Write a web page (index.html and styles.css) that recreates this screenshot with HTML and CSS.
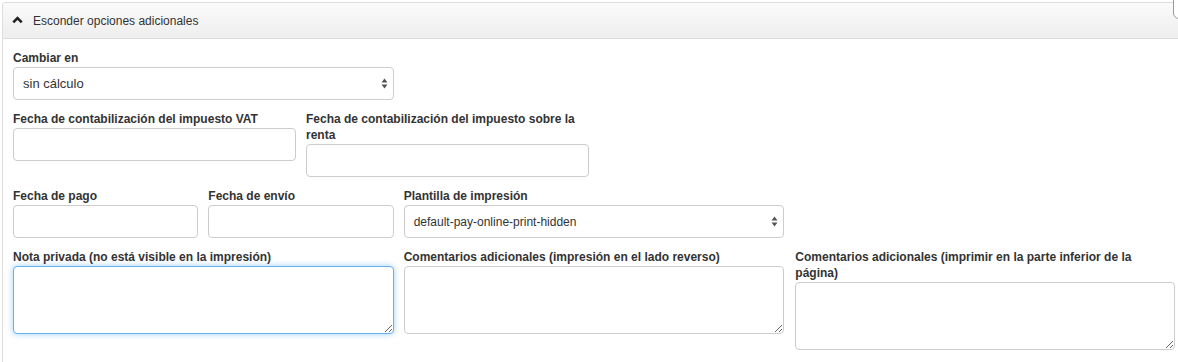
FILE: index.html
```html
<!DOCTYPE html>
<html lang="es">
<head>
    <meta charset="UTF-8" />
    <meta name="viewport" content="width=device-width, initial-scale=1" />
    <title>Opciones adicionales</title>
    <link rel="stylesheet" href="styles.css">
</head>
<body>
    <div class="panel">
        <div class="panel-heading">
            <svg class="chevron" width="11" height="9" viewBox="0 0 11 9">
                <polyline points="1.3,7.3 5.5,3 9.7,7.3" fill="none" stroke="#222" stroke-width="2.6" />
            </svg>
            <span>Esconder opciones adicionales</span>
        </div>
        <div class="panel-body">
            <div class="form-row">
                <div class="form-group span-4">
                    <label>Cambiar en</label>
                    <div class="select-wrap">
                        <select class="form-control"><option>sin cálculo</option></select>
                        <svg class="select-arrows" width="7" height="11" viewBox="0 0 7 11">
                            <polygon points="3.5,0.5 6.5,4.5 0.5,4.5" fill="#555" />
                            <polygon points="3.5,10.5 6.5,6.5 0.5,6.5" fill="#555" />
                        </svg>
                    </div>
                </div>
            </div>
            <div class="form-row">
                <div class="form-group span-3">
                    <label>Fecha de contabilización del impuesto VAT</label>
                    <input class="form-control" type="text">
                </div>
                <div class="form-group span-3">
                    <label>Fecha de contabilización del impuesto sobre la renta</label>
                    <input class="form-control" type="text">
                </div>
            </div>
            <div class="form-row">
                <div class="form-group span-2">
                    <label>Fecha de pago</label>
                    <input class="form-control" type="text">
                </div>
                <div class="form-group span-2">
                    <label>Fecha de envío</label>
                    <input class="form-control" type="text">
                </div>
                <div class="form-group span-4">
                    <label>Plantilla de impresión</label>
                    <div class="select-wrap">
                        <select class="form-control small"><option>default-pay-online-print-hidden</option></select>
                        <svg class="select-arrows" width="7" height="11" viewBox="0 0 7 11">
                            <polygon points="3.5,0.5 6.5,4.5 0.5,4.5" fill="#555" />
                            <polygon points="3.5,10.5 6.5,6.5 0.5,6.5" fill="#555" />
                        </svg>
                    </div>
                </div>
            </div>
            <div class="form-row">
                <div class="form-group span-4">
                    <label>Nota privada (no está visible en la impresión)</label>
                    <textarea class="form-control focused"></textarea>
                </div>
                <div class="form-group span-4">
                    <label>Comentarios adicionales (impresión en el lado reverso)</label>
                    <textarea class="form-control"></textarea>
                </div>
                <div class="form-group span-4 last-col">
                    <label>Comentarios adicionales (imprimir en la parte inferior de la página)</label>
                    <textarea class="form-control"></textarea>
                </div>
            </div>
        </div>
    </div>
    <div class="corner-edge"></div>
</body>
</html>
```

FILE: styles.css
```css
html, body {
    margin: 0;
    background: #fff;
}
body {
    height: 362px;
    font-family: 'Liberation Sans', Arial, Helvetica, sans-serif;
    font-size: 12px;
    color: #333;
    overflow: hidden;
    position: relative;
}
.panel {
    box-sizing: border-box;
    margin: 2px 0 0 2px;
    width: 1200px;
    height: 360px;
    border: 1px solid #ddd;
    border-bottom: none;
    border-radius: 4px 4px 0 0;
}
.panel-heading {
    height: 35px;
    display: flex;
    align-items: center;
    padding-left: 9px;
    background: linear-gradient(to bottom, #fafafa 0%, #eeeeee 100%);
    border-bottom: 1px solid #ddd;
    border-radius: 4px 4px 0 0;
    color: #333;
}
.chevron {
    margin-right: 10px;
    margin-top: -2px;
}
.panel-body {
    padding: 11px 10px;
}
.form-row {
    width: 1162px;
    display: grid;
    grid-template-columns: repeat(12, 1fr);
    column-gap: 10px;
    align-items: start;
}
.span-2 { grid-column: span 2; }
.span-3 { grid-column: span 3; }
.span-4 { grid-column: span 4; }
.last-col {
    margin-left: 1px;
}
.form-group {
    margin-bottom: 11px;
}
.form-group label {
    display: block;
    font-weight: bold;
    line-height: 16px;
    margin-bottom: 1px;
    color: #333;
}
.form-control {
    display: block;
    box-sizing: border-box;
    width: 100%;
    height: 33px;
    margin: 0;
    padding: 6px 9px;
    border: 1px solid #ccc;
    border-radius: 4px;
    background: #fff;
    font-family: inherit;
    font-size: 13px;
    color: #333;
    outline: none;
}
textarea.form-control {
    height: 68px;
    resize: both;
}
.form-control.focused {
    border-color: #66afe9;
    box-shadow: 0 0 6px rgba(102, 175, 233, 0.6);
}
.select-wrap {
    position: relative;
}
select.form-control {
    appearance: none;
    -webkit-appearance: none;
    height: 33px;
    padding: 0 24px 0 9px;
}
select.form-control.small {
    font-size: 12px;
}
.select-arrows {
    position: absolute;
    right: 6px;
    top: 11px;
    pointer-events: none;
}
.corner-edge {
    position: absolute;
    left: 1173px;
    top: -10px;
    width: 20px;
    height: 27px;
    border: 1px solid #999;
    border-radius: 0 0 0 6px;
    background: #fff;
}
```
